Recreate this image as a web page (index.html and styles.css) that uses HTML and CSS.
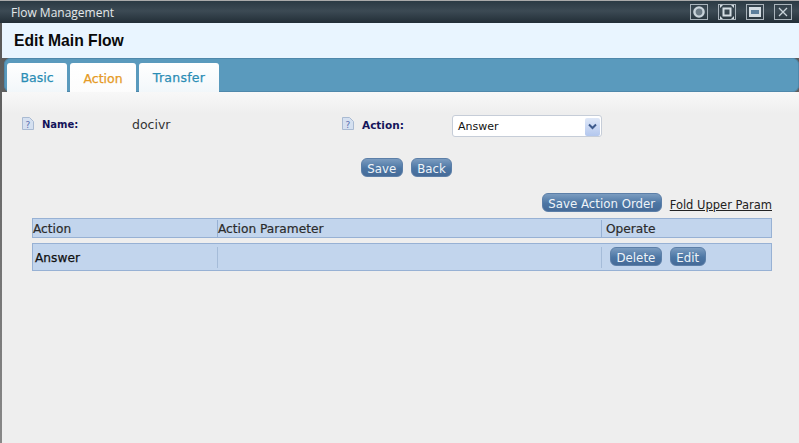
FILE: index.html
```html
<!DOCTYPE html>
<html lang="en">
<head>
<meta charset="utf-8">
<title>Flow Management</title>
<link rel="stylesheet" href="styles.css">
</head>
<body>
<div class="window">
  <div class="titlebar">
    <span class="title">Flow Management</span>
    <div class="win-btns">
      <span class="win-btn"><svg width="14" height="14" viewBox="0 0 14 14"><circle cx="7" cy="7" r="4.6" fill="#6b7a85" stroke="#c9d3da" stroke-width="2.4"/></svg></span>
      <span class="win-btn"><svg width="14" height="14" viewBox="0 0 14 14"><rect x="3.5" y="3.5" width="7" height="7" fill="none" stroke="#d4dde3" stroke-width="2"/><path d="M0 0h3L0 3zM14 0v3l-3-3zM0 14v-3l3 3zM14 14h-3l3-3z" fill="#d4dde3"/></svg></span>
      <span class="win-btn"><svg width="14" height="14" viewBox="0 0 14 14"><rect x="1" y="2" width="12" height="10" fill="#d4dde3"/><rect x="3" y="5" width="8" height="4" fill="#5d7f9c"/></svg></span>
      <span class="win-btn"><svg width="14" height="14" viewBox="0 0 14 14"><path d="M3 3l8 8M11 3l-8 8" stroke="#c9d3da" stroke-width="1.3" fill="none"/></svg></span>
    </div>
  </div>
  <div class="heading">Edit Main Flow</div>
  <div class="tabbar">
    <span class="tab tab-basic">Basic</span>
    <span class="tab tab-action">Action</span>
    <span class="tab tab-transfer">Transfer</span>
  </div>
  <div class="content">
    <div class="form-row">
      <div class="field field-name">
        <svg class="help" width="12" height="13" viewBox="0 0 12 13"><path d="M.5.5h7l4 4v8H.5z" fill="#d5e0f0" stroke="#a9bad2"/><text x="6" y="10.5" class="help-q">?</text></svg>
        <span class="label label-name">Name:</span>
        <span class="value">docivr</span>
      </div>
      <div class="field">
        <svg class="help" width="12" height="13" viewBox="0 0 12 13"><path d="M.5.5h7l4 4v8H.5z" fill="#d5e0f0" stroke="#a9bad2"/><text x="6" y="10.5" class="help-q">?</text></svg>
        <span class="label label-action">Action:</span>
        <span class="select"><span class="select-text">Answer</span><span class="select-arrow"><svg width="9" height="7" viewBox="0 0 9 7"><path d="M1 1.5l3.5 3.5L8 1.5" fill="none" stroke="#3d5a8c" stroke-width="2"/></svg></span></span>
      </div>
    </div>
    <div class="form-actions">
      <span class="btn">Save</span>
      <span class="btn">Back</span>
    </div>
    <div class="table-tools">
      <span class="btn">Save Action Order</span>
      <span class="fold">Fold Upper Param</span>
    </div>
    <div class="grid grid-head">
      <div class="cell cell-action">Action</div>
      <div class="cell cell-param">Action Parameter</div>
      <div class="cell cell-op">Operate</div>
    </div>
    <div class="grid grid-row">
      <div class="cell cell-action answer">Answer</div>
      <div class="cell cell-param"></div>
      <div class="cell cell-op ops"><span class="btn">Delete</span><span class="btn">Edit</span></div>
    </div>
  </div>
</div>
</body>
</html>
```
FILE: styles.css
```css
* { box-sizing: border-box; }
html, body { margin: 0; padding: 0; height: 100%; overflow: hidden; }
body { background: #777; font-family: "DejaVu Sans", sans-serif; }
.window { width: 799px; height: 443px; display: flex; flex-direction: column; padding-left: 2px; background: linear-gradient(#555, #888); }
.titlebar { height: 23px; margin-left: -2px; padding: 0 7px 0 11px; display: flex; align-items: center; justify-content: space-between; background: linear-gradient(#2b3a44, #3c4a54 45%, #222e37); border-top: 1px solid #aaa; }
.title { font: 12px "Open Sans", "Liberation Sans", sans-serif; color: #e4e8ea; }
.win-btns { display: flex; gap: 10px; }
.win-btn { width: 18px; height: 16px; border: 1px solid #aab4bc; display: flex; align-items: center; justify-content: center; }
.heading { height: 35px; padding-left: 12px; display: flex; align-items: center; background: #e9f5ff; font: bold 15.7px "Liberation Sans", sans-serif; color: #0a0a0a; }
.tabbar { height: 34px; margin-left: 2px; padding: 4px 0 0 2px; display: flex; gap: 3px; background: #5a9abd; border: 1px solid #4f88ab; border-radius: 6px; }
.tab { height: 29px; display: flex; align-items: center; justify-content: center; background: linear-gradient(#fff, #f2f7fa); border-radius: 3px 3px 0 0; font-size: 12.5px; color: #2a8db5; -webkit-text-stroke: .25px; }
.tab-basic { width: 60px; }
.tab-action { width: 66px; height: 30px; background: linear-gradient(#fff, #fcfcfc); color: #e59a25; }
.tab-transfer { width: 80px; letter-spacing: .25px; }
.content { flex: 1; background: linear-gradient(#f8f8f8, #eee 22px); padding: 0 27px 0 30px; }
.form-row { display: flex; padding-top: 25px; height: 66px; margin-left: -10px; }
.field { display: flex; align-items: flex-start; }
.field-name { width: 320px; }
.help { flex: none; }
.label { font-size: 10.5px; font-weight: bold; color: #14145a; line-height: 16px; padding-left: 8px; }
.label-name { width: 98px; font-size: 10px; }
.label-action { width: 98px; }
.value { font-size: 12.5px; color: #333; line-height: 15px; }
.select { width: 150px; height: 22px; background: #fff; border: 1px solid #c6cdd8; border-radius: 3px; display: flex; align-items: center; justify-content: space-between; padding: 1px 1px 0 5px; font-size: 11px; color: #111; margin-top: -2px; }
.select-arrow { width: 15px; height: 18px; background: linear-gradient(#dfe8f8, #b3c7ee); border-radius: 2px; display: flex; align-items: center; justify-content: center; }
.form-actions { display: flex; justify-content: center; gap: 8px; height: 20px; padding-left: 9px; }
.btn { height: 19px; padding: 2px 5.5px 0; display: inline-flex; align-items: center; font-size: 11.8px; color: #eef3f8; background: linear-gradient(#7b9cc0, #4c76a4 55%, #466b98); border: 1px solid #5c7fa8; border-radius: 6px; }
.table-tools { display: flex; justify-content: flex-end; align-items: flex-start; gap: 8px; padding-top: 15px; height: 40px; }
.fold { font-size: 11.5px; line-height: 24px; color: #222; text-decoration: underline; }
.grid { display: grid; grid-template-columns: 184px 384px 1fr; background: #c2d5ed; border: 1px solid #97b1d4; font-size: 12.2px; color: #2b2b2b; }
.grid-head { height: 20px; padding-top: 1px; -webkit-text-stroke: .2px; }
.grid-row { height: 28px; margin-top: 5px; }
.cell { display: flex; align-items: center; }
.grid-head .cell + .cell { border-left: 1px solid #97b1d4; }
.grid-row .cell + .cell { border-left: 1px solid #a5bcd9; margin: 3px 0; }
.answer { padding-left: 2px; color: #111; -webkit-text-stroke: .25px; }
.cell-op { padding-left: 4px; }
.ops { gap: 8px; padding: 0 0 2px 8px; }
.help-q { font: 9px "DejaVu Sans", sans-serif; fill: #5a6fb0; text-anchor: middle; }
```
